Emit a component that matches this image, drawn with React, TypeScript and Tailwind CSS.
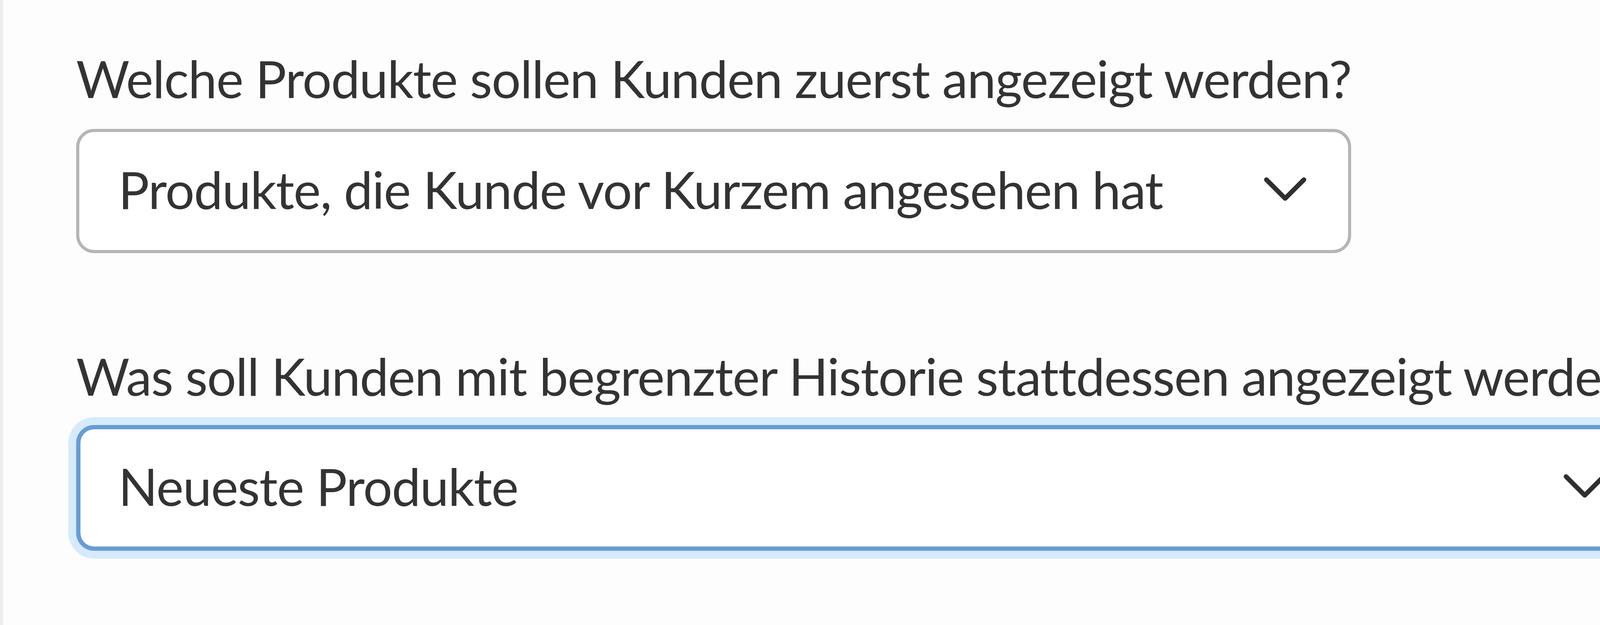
import React from "react";

function Chevron() {
  return (
    <svg width="110" height="62" viewBox="0 0 110 62" className="shrink-0" aria-hidden="true">
      <path d="M7 7 L55 55 L103 7" fill="none" stroke="#2f2f2f" strokeWidth="12" strokeLinecap="round" strokeLinejoin="round" />
    </svg>
  );
}

function Field({ label, value, focused }: { label: string; value: string; focused?: boolean }) {
  return (
    <div className="inline-flex w-fit flex-col">
      <label className="whitespace-nowrap text-[132px] leading-none tracking-[-1.6px] text-[#333333]">{label}</label>
      {focused ? (
        <div className="mt-[60px] flex h-[322px] w-full items-center justify-between rounded-[46px] border-[11px] border-[#679cd6] bg-white pb-[10px] pl-[97px] pr-[103px] shadow-[0_0_0_20px_#d5ebfb]">
          <span className="whitespace-nowrap text-[132px] leading-none tracking-[-1.6px] text-[#333333]">{value}</span>
          <Chevron />
        </div>
      ) : (
        <div className="mt-[64px] flex h-[318px] w-full items-center justify-between rounded-[46px] border-[8px] border-[#b5b5b5] bg-white pb-[10px] pl-[100px] pr-[106px]">
          <span className="whitespace-nowrap text-[132px] leading-none tracking-[-1.6px] text-[#333333]">{value}</span>
          <Chevron />
        </div>
      )}
    </div>
  );
}

export default function App() {
  return (
    <div
      className="min-h-screen border-l-[8px] border-[#eceeef] bg-[#fdfdfd] pl-[187px] pt-[134px]"
      style={{ fontFamily: "Lato, 'Noto Sans', sans-serif" }}
    >
      <div className="flex flex-col items-start gap-[248px]">
        <Field label="Welche Produkte sollen Kunden zuerst angezeigt werden?" value="Produkte, die Kunde vor Kurzem angesehen hat" />
        <Field label="Was soll Kunden mit begrenzter Historie stattdessen angezeigt werden?" value="Neueste Produkte" focused />
      </div>
    </div>
  );
}
